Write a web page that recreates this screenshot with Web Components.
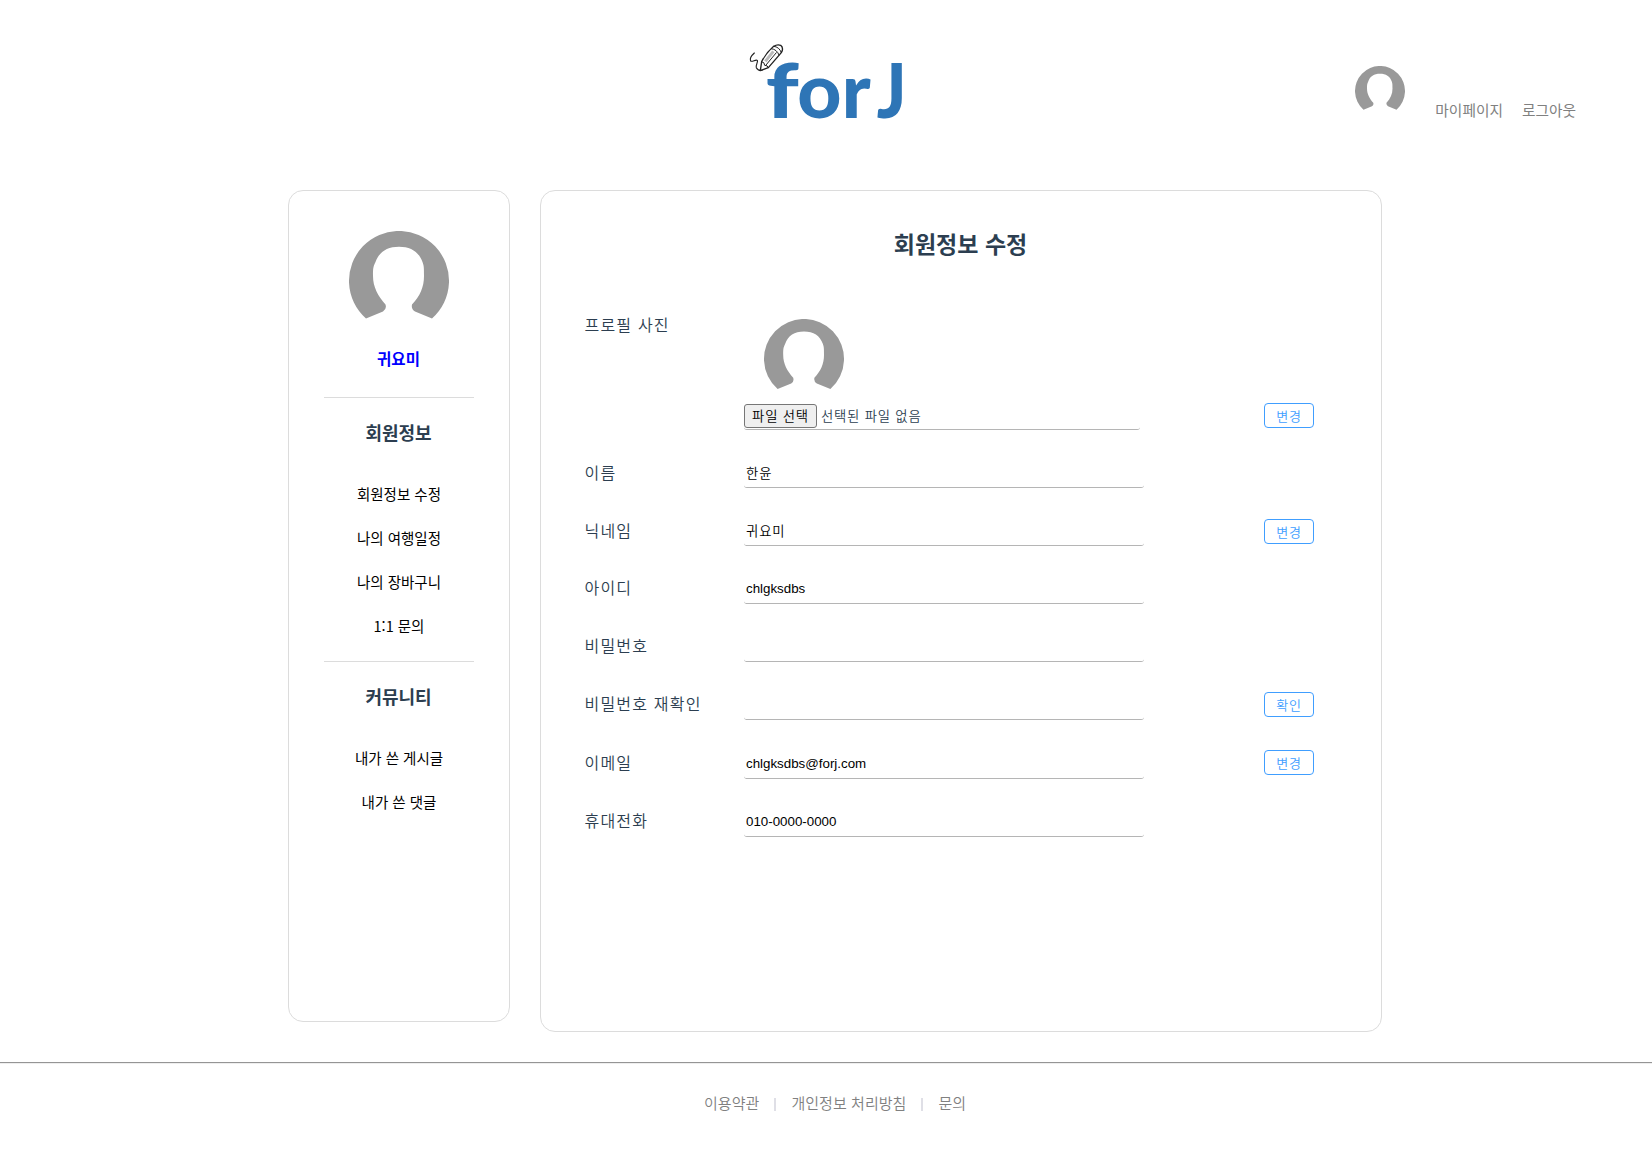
<!DOCTYPE html>
<html lang="ko">
<head>
<meta charset="utf-8">
<title>forJ</title>
<style>
body{margin:0;background:#fff;color:#2c3e50;font-family:"Noto Sans CJK KR","Liberation Sans",sans-serif}
</style>
</head>
<body>
<forj-app></forj-app>
<script>
const define = (name, html, setup) => {
  const t = document.createElement('template');
  t.innerHTML = html;
  customElements.define(name, class extends HTMLElement {
    constructor() {
      super();
      this.attachShadow({mode: 'open'}).append(t.content.cloneNode(true));
    }
    connectedCallback() { if (setup) setup(this, this.shadowRoot); }
  });
};

define('user-avatar', `
<style>:host{display:block;width:var(--size,100px);height:var(--size,100px);flex:none}svg{display:block;width:100%;height:100%}</style>
<svg viewBox="0 0 100 100"><path fill="#999" d="M17 87.5A50 50 0 1 1 83 87.5L66 80.5Q62 78 63 73.5C71 65 75 56 75 45C75 37 75 35 73.500 31C70 21 62 15.700 50 15.700C38 15.700 30 21 26.500 31C24 36 24 38 24 45C24 56 29 65 36.500 73.500Q38 78 34 80.500Z"/></svg>`);

define('forj-logo', `
<style>:host{display:block;width:200px;height:110px}svg{display:block;overflow:visible}text{font-family:Lato,sans-serif;font-weight:900;fill:#2e75b6}</style>
<svg width="200" height="110" viewBox="0 0 600 330">
<g font-size="230"><text transform="translate(107 264) scale(1.19 1)">f</text><text transform="translate(202 264)">o</text><text transform="translate(335 264)">r</text><text transform="translate(440 264) scale(.9 1)">J</text></g>
<g fill="none" stroke="#222" stroke-width="4" stroke-linecap="round" stroke-linejoin="round">
<path stroke-width="3.500" d="M73 69C64 77 59 87 62 93C67 97 77 87 82 91C85 97 76 105 79 113C83 121 89 122 96 121"/>
<path fill="#fff" d="M95 95L91 122L115 113L154 68Q162 54 152 46Q142 42 131 49Q109 68 95 95Z"/>
<path stroke="#bbb" stroke-width="9" stroke-linecap="butt" d="M106 94L130 64"/>
<path stroke-width="3" d="M95 95Q104 96 104 106Q113 105 115 113M131 49Q148 50 154 68M124 56Q141 58 147 75M108 105L139 68"/>
</g></svg>`);

define('site-header', `
<style>
:host{display:flex;height:190px;box-sizing:border-box;padding:30px 76px 0 730px;justify-content:space-between;align-items:flex-start}
nav{display:flex;padding-top:36px;--size:50px}
a{font-size:14.700px;line-height:22px;color:#808080;margin-top:33px;white-space:nowrap}
a:nth-of-type(1){margin-left:30px}a:nth-of-type(2){margin-left:19px}
</style>
<forj-logo></forj-logo>
<nav><user-avatar></user-avatar><a>마이페이지</a><a>로그아웃</a></nav>`);

define('side-menu', `
<style>
:host{display:flex;flex-direction:column;align-items:center;box-sizing:border-box;width:222px;height:832px;border:1px solid #dcdcdc;border-radius:15px;padding-top:40px;color:#000}
b{font-size:15.500px;line-height:24px;color:#00f;margin:15px 1px 27px 0;font-weight:700}
hr{width:150px;height:1px;border:0;background:#dcdcdc;margin:0}
h3{font-size:18px;line-height:26px;margin:21px 1px 38px 0;color:#2c3e50}
a{font-size:14.500px;line-height:22px;margin-bottom:22px}
.end{margin-bottom:24px}
</style>
<user-avatar></user-avatar><b>귀요미</b><hr>
<h3>회원정보</h3><a>회원정보 수정</a><a>나의 여행일정</a><a>나의 장바구니</a><a class="end">1:1 문의</a><hr>
<h3>커뮤니티</h3><a>내가 쓴 게시글</a><a>내가 쓴 댓글</a>`);

define('line-button', `
<style>:host{display:block;width:50px;height:25px}
button{display:block;box-sizing:border-box;width:50px;height:25px;padding:0;border:1px solid #409eff;border-radius:4px;background:#fff;color:#409eff;font:350 13px/23px "Noto Sans CJK KR",sans-serif;letter-spacing:.9px}</style>
<button><slot></slot></button>`);

define('form-row', `
<style>
:host{display:grid;grid-template-columns:159px 520px 50px;height:var(--h,58px);align-items:start}
label{font-size:16px;line-height:24px;font-weight:350;letter-spacing:1.2px;padding-top:var(--label,9px);margin-left:-.5px;white-space:nowrap}
input{display:block;box-sizing:border-box;width:400px;height:30px;margin-top:8px;padding:0 2px 0;border:0 solid #b5b5b5;border-bottom-width:1px;border-radius:3px;background:transparent;color:#000;font:13.333px "Liberation Sans","Noto Sans CJK KR",sans-serif;outline:0}
input.ko{font-weight:350;letter-spacing:.9px;font-family:"Noto Sans CJK KR",sans-serif}
line-button{margin-top:var(--btn,11px)}
</style>
<label></label><input><line-button></line-button>`, (el, root) => {
  root.querySelector('label').textContent = el.getAttribute('label');
  const input = root.querySelector('input');
  input.value = el.getAttribute('value') || '';
  if (/[가-힣]/.test(input.value)) input.className = 'ko';
  const b = root.querySelector('line-button');
  const action = el.getAttribute('action');
  if (action) b.textContent = action; else b.remove();
});

define('photo-row', `
<style>
:host{display:grid;grid-template-columns:159px 520px 50px;height:141px;align-items:start}
label{font-size:16px;line-height:24px;font-weight:350;letter-spacing:1.2px;padding-top:3px;margin-left:-.5px}
.media{--size:80px}
user-avatar{margin:10px 0 5px 20px}
.file{display:flex;align-items:flex-start;box-sizing:border-box;width:396px;height:26px;border-bottom:1px solid #b5b5b5;border-radius:3px;font-size:13.333px;font-weight:350;letter-spacing:.8px}
button{box-sizing:border-box;width:73px;height:24px;padding:0;border:1px solid #767676;border-radius:3px;background:#efefef;color:#000;font:inherit;line-height:20px;letter-spacing:inherit}
span{margin-left:4px;line-height:23px}
line-button{margin-top:94px}
</style>
<label>프로필 사진</label>
<div class="media"><user-avatar></user-avatar><div class="file"><button>파일 선택</button><span>선택된 파일 없음</span></div></div>
<line-button>변경</line-button>`);

define('profile-card', `
<style>
:host{display:block;box-sizing:border-box;width:842px;height:842px;border:1px solid #dcdcdc;border-radius:15px;padding:34px 0 0 44px}
h2{margin:0 1px 48px -44px;text-align:center;font-size:23px;line-height:36px}
.upper{--label:10px}
</style>
<h2>회원정보 수정</h2>
<photo-row></photo-row>
<form-row class="upper" label="이름" value="한윤"></form-row>
<form-row class="upper" label="닉네임" value="귀요미" action="변경"></form-row>
<form-row label="아이디" value="chlgksdbs"></form-row>
<form-row label="비밀번호"></form-row>
<form-row label="비밀번호 재확인" action="확인" style="--h:59px;--btn:10px"></form-row>
<form-row label="이메일" value="chlgksdbs@forj.com" action="변경" style="--btn:9px"></form-row>
<form-row label="휴대전화" value="010-0000-0000"></form-row>`);

define('site-footer', `
<style>
:host{display:block;margin-top:30px;border-top:1px solid #959595}
nav{display:flex;justify-content:flex-start;align-items:center;border-top:1px solid #eee;padding:27px 0 0 704px;font-size:15px;line-height:24px;color:#808080;font-weight:350}
i{width:2px;height:13px;background:#dfdfe6;margin:3px 15px 0 15px}
span{letter-spacing:.05px}
</style>
<nav><span>이용약관</span><i></i><span>개인정보 처리방침</span><i></i><span>문의</span></nav>`);

define('forj-app', `
<style>:host{display:block}main{display:flex;gap:30px;align-items:flex-start;padding-left:288px}</style>
<site-header></site-header>
<main><side-menu></side-menu><profile-card></profile-card></main>
<site-footer></site-footer>`);
</script>
</body>
</html>
